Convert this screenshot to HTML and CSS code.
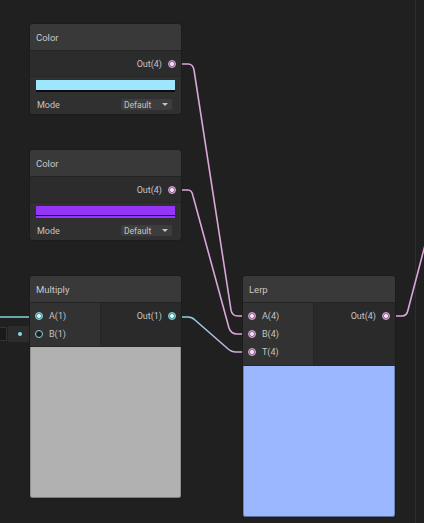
FILE: index.html
```html
<!DOCTYPE html>
<html>
<head>
<meta charset="utf-8">
<link rel="stylesheet" href="styles.css">
</head>
<body>
<div class="canvas">
  <div class="divider"></div>
  <svg class="wires" width="424" height="523" viewBox="0 0 424 523">
    <defs>
      <linearGradient id="g3" gradientUnits="userSpaceOnUse" x1="180" y1="0" x2="244" y2="0">
        <stop offset="0" stop-color="#7fd6dc"/>
        <stop offset="1" stop-color="#d9a7d8"/>
      </linearGradient>
    </defs>
    <path class="w pink" d="M176,64 H188 Q193,64 194,70 L231,310 Q232,316 238,316 H246"/>
    <path class="w pink" d="M176,190 H188 Q192,190 193,196 L229,328 Q231,334 237,334 H246"/>
    <path class="w" stroke="url(#g3)" d="M176,317 H188 Q192,317 195,320 L227,348 Q231,352 236,352 H246"/>
    <path class="w pink" d="M390,316 H402 Q407,316 408,310 L430,226"/>
    <path class="w cyan" d="M0,317 H34"/>
    <path class="w cyan" d="M20,335 H34"/>
  </svg>

  <div class="inline-field">
    <div class="field-box"></div>
    <div class="field-dot"><i></i></div>
  </div>

  <div class="node color-node n1">
    <div class="title">Color</div>
    <div class="ports-single">
      <div class="row out"><span>Out(4)</span><i class="port pink"></i></div>
    </div>
    <div class="props">
      <div class="swatch cyan-swatch"></div>
      <div class="mode-row"><span>Mode</span><div class="dropdown"><span>Default</span><span class="arrow"></span></div></div>
    </div>
  </div>

  <div class="node color-node n2">
    <div class="title">Color</div>
    <div class="ports-single">
      <div class="row out"><span>Out(4)</span><i class="port pink"></i></div>
    </div>
    <div class="props">
      <div class="swatch purple-swatch"></div>
      <div class="mode-row"><span>Mode</span><div class="dropdown"><span>Default</span><span class="arrow"></span></div></div>
    </div>
  </div>

  <div class="node mul">
    <div class="title">Multiply</div>
    <div class="ports">
      <div class="inputs">
        <div class="row in"><i class="port cyan-p"></i><span>A(1)</span></div>
        <div class="row in"><i class="port cyan-p hollow"></i><span>B(1)</span></div>
      </div>
      <div class="outputs">
        <div class="row out"><span>Out(1)</span><i class="port cyan-p"></i></div>
      </div>
    </div>
    <div class="preview gray"></div>
  </div>

  <div class="node lerp">
    <div class="title">Lerp</div>
    <div class="ports">
      <div class="inputs">
        <div class="row in"><i class="port pink"></i><span>A(4)</span></div>
        <div class="row in"><i class="port pink"></i><span>B(4)</span></div>
        <div class="row in"><i class="port pink"></i><span>T(4)</span></div>
      </div>
      <div class="outputs">
        <div class="row out"><span>Out(4)</span><i class="port pink"></i></div>
      </div>
    </div>
    <div class="preview blue"></div>
  </div>
</div>
</body>
</html>
```

FILE: styles.css
```css
* { box-sizing: border-box; }
html, body { margin: 0; padding: 0; background: #202020; }
body { font-family: Roboto, "Liberation Sans", sans-serif; color: #c4c4c4; }

.canvas {
  position: relative;
  width: 424px;
  height: 523px;
  overflow: hidden;
  background: #202020;
}

.divider {
  position: absolute;
  left: 415px;
  top: 0;
  width: 1px;
  height: 523px;
  background: #2e2e2e;
}

.wires { position: absolute; left: 0; top: 0; }
.w { fill: none; stroke-width: 1.6; stroke-linejoin: round; }
.w.pink { stroke: #d9a7d8; }
.w.cyan { stroke: #7fd6dc; }

.node {
  position: absolute;
  width: 151px;
  border-radius: 3px;
  overflow: hidden;
  background: #2d2d2d;
  box-shadow: 0 0 0 1px #1c1c1c;
}
.n1 { left: 30px; top: 24px; }
.n2 { left: 30px; top: 150px; }
.mul { left: 30px; top: 276px; }
.lerp { left: 243px; top: 276px; width: 152px; }

.title {
  height: 27px;
  display: flex;
  align-items: center;
  padding-left: 6px;
  background: #393939;
  border-bottom: 1px solid #242424;
  font-size: 9.5px;
  color: #c8c8c8;
}

.ports-single {
  height: 26px;
  display: flex;
  align-items: center;
  justify-content: flex-end;
  background: #2c2c2c;
  border-bottom: 1px solid #262626;
}

.row {
  height: 18px;
  display: flex;
  align-items: center;
  gap: 6px;
  font-size: 9px;
  color: #c4c4c4;
}
.row.in { padding-left: 5px; }
.row.out { justify-content: flex-end; padding-right: 5px; }

.port {
  display: block;
  width: 8px;
  height: 8px;
  border-radius: 50%;
  border: 1.5px solid;
  flex: none;
}
.port.pink {
  border-color: #dcaadb;
  background: radial-gradient(circle, #f4dcf3 0 1.6px, #8a6a8a 2.2px);
}
.port.cyan-p {
  border-color: #84dde2;
  background: radial-gradient(circle, #d8f6f7 0 1.6px, #4f8c90 2.2px);
}
.port.hollow { background: #1e1e1e; border-color: #84dde2; }

.props {
  height: 37px;
  background: #303030;
  padding: 3px 6px 0 6px;
}
.swatch {
  height: 12px;
  border-bottom: 2px solid #0c0c0c;
}
.cyan-swatch { background: #9de6fc; }
.purple-swatch {
  background: linear-gradient(#9535f7 0 9px, #0c0c0c 9px 10px, #9535f7 10px);
  border-bottom: 0;
}
.mode-row {
  margin-top: 7px;
  display: flex;
  align-items: center;
  justify-content: space-between;
  padding-left: 1px;
  font-size: 9px;
  color: #c4c4c4;
}
.dropdown {
  width: 51px;
  height: 11px;
  margin-right: 3px;
  background: #3d3d3d;
  border-radius: 2px;
  display: flex;
  align-items: center;
  justify-content: space-between;
  padding: 0 4px 0 3px;
  font-size: 8.5px;
  color: #c4c4c4;
}
.arrow {
  width: 0;
  height: 0;
  border-left: 3px solid transparent;
  border-right: 3px solid transparent;
  border-top: 3.5px solid #c4c4c4;
}

.ports {
  display: flex;
  border-bottom: 1px solid #262626;
}
.inputs {
  width: 71px;
  background: #323232;
  border-right: 1px solid #262626;
  padding: 4px 0 3px 0;
}
.outputs {
  flex: 1;
  background: #2a2a2a;
  padding-top: 4px;
}
.mul .inputs { padding-bottom: 3px; }
.lerp .inputs { padding-bottom: 4px; }

.preview {
  height: 151px;
  border-radius: 0 0 3px 3px;
}
.preview.gray { background: #b1b1b1; box-shadow: inset 1px 0 0 #8f8f8f, inset -1px 0 0 #8f8f8f, inset 0 -1px 0 #7d7d7d; }
.preview.blue { background: #9bb7ff; box-shadow: inset 1px 0 0 #6f84b8, inset -1px 0 0 #6f84b8, inset 0 -1px 0 #5c6c94; }

.inline-field {
  position: absolute;
  left: 0;
  top: 327px;
  display: flex;
  gap: 1px;
}
.field-box {
  width: 7px;
  height: 14px;
  background: #1a1a1a;
  border: 1px solid #333;
  border-left: 0;
}
.field-dot {
  width: 21px;
  height: 16px;
  margin-top: -1px;
  background: #2c2c2c;
  display: flex;
  align-items: center;
  padding-left: 10px;
}
.field-dot i {
  display: block;
  width: 4px;
  height: 4px;
  border-radius: 50%;
  background: #84dde2;
}
```
